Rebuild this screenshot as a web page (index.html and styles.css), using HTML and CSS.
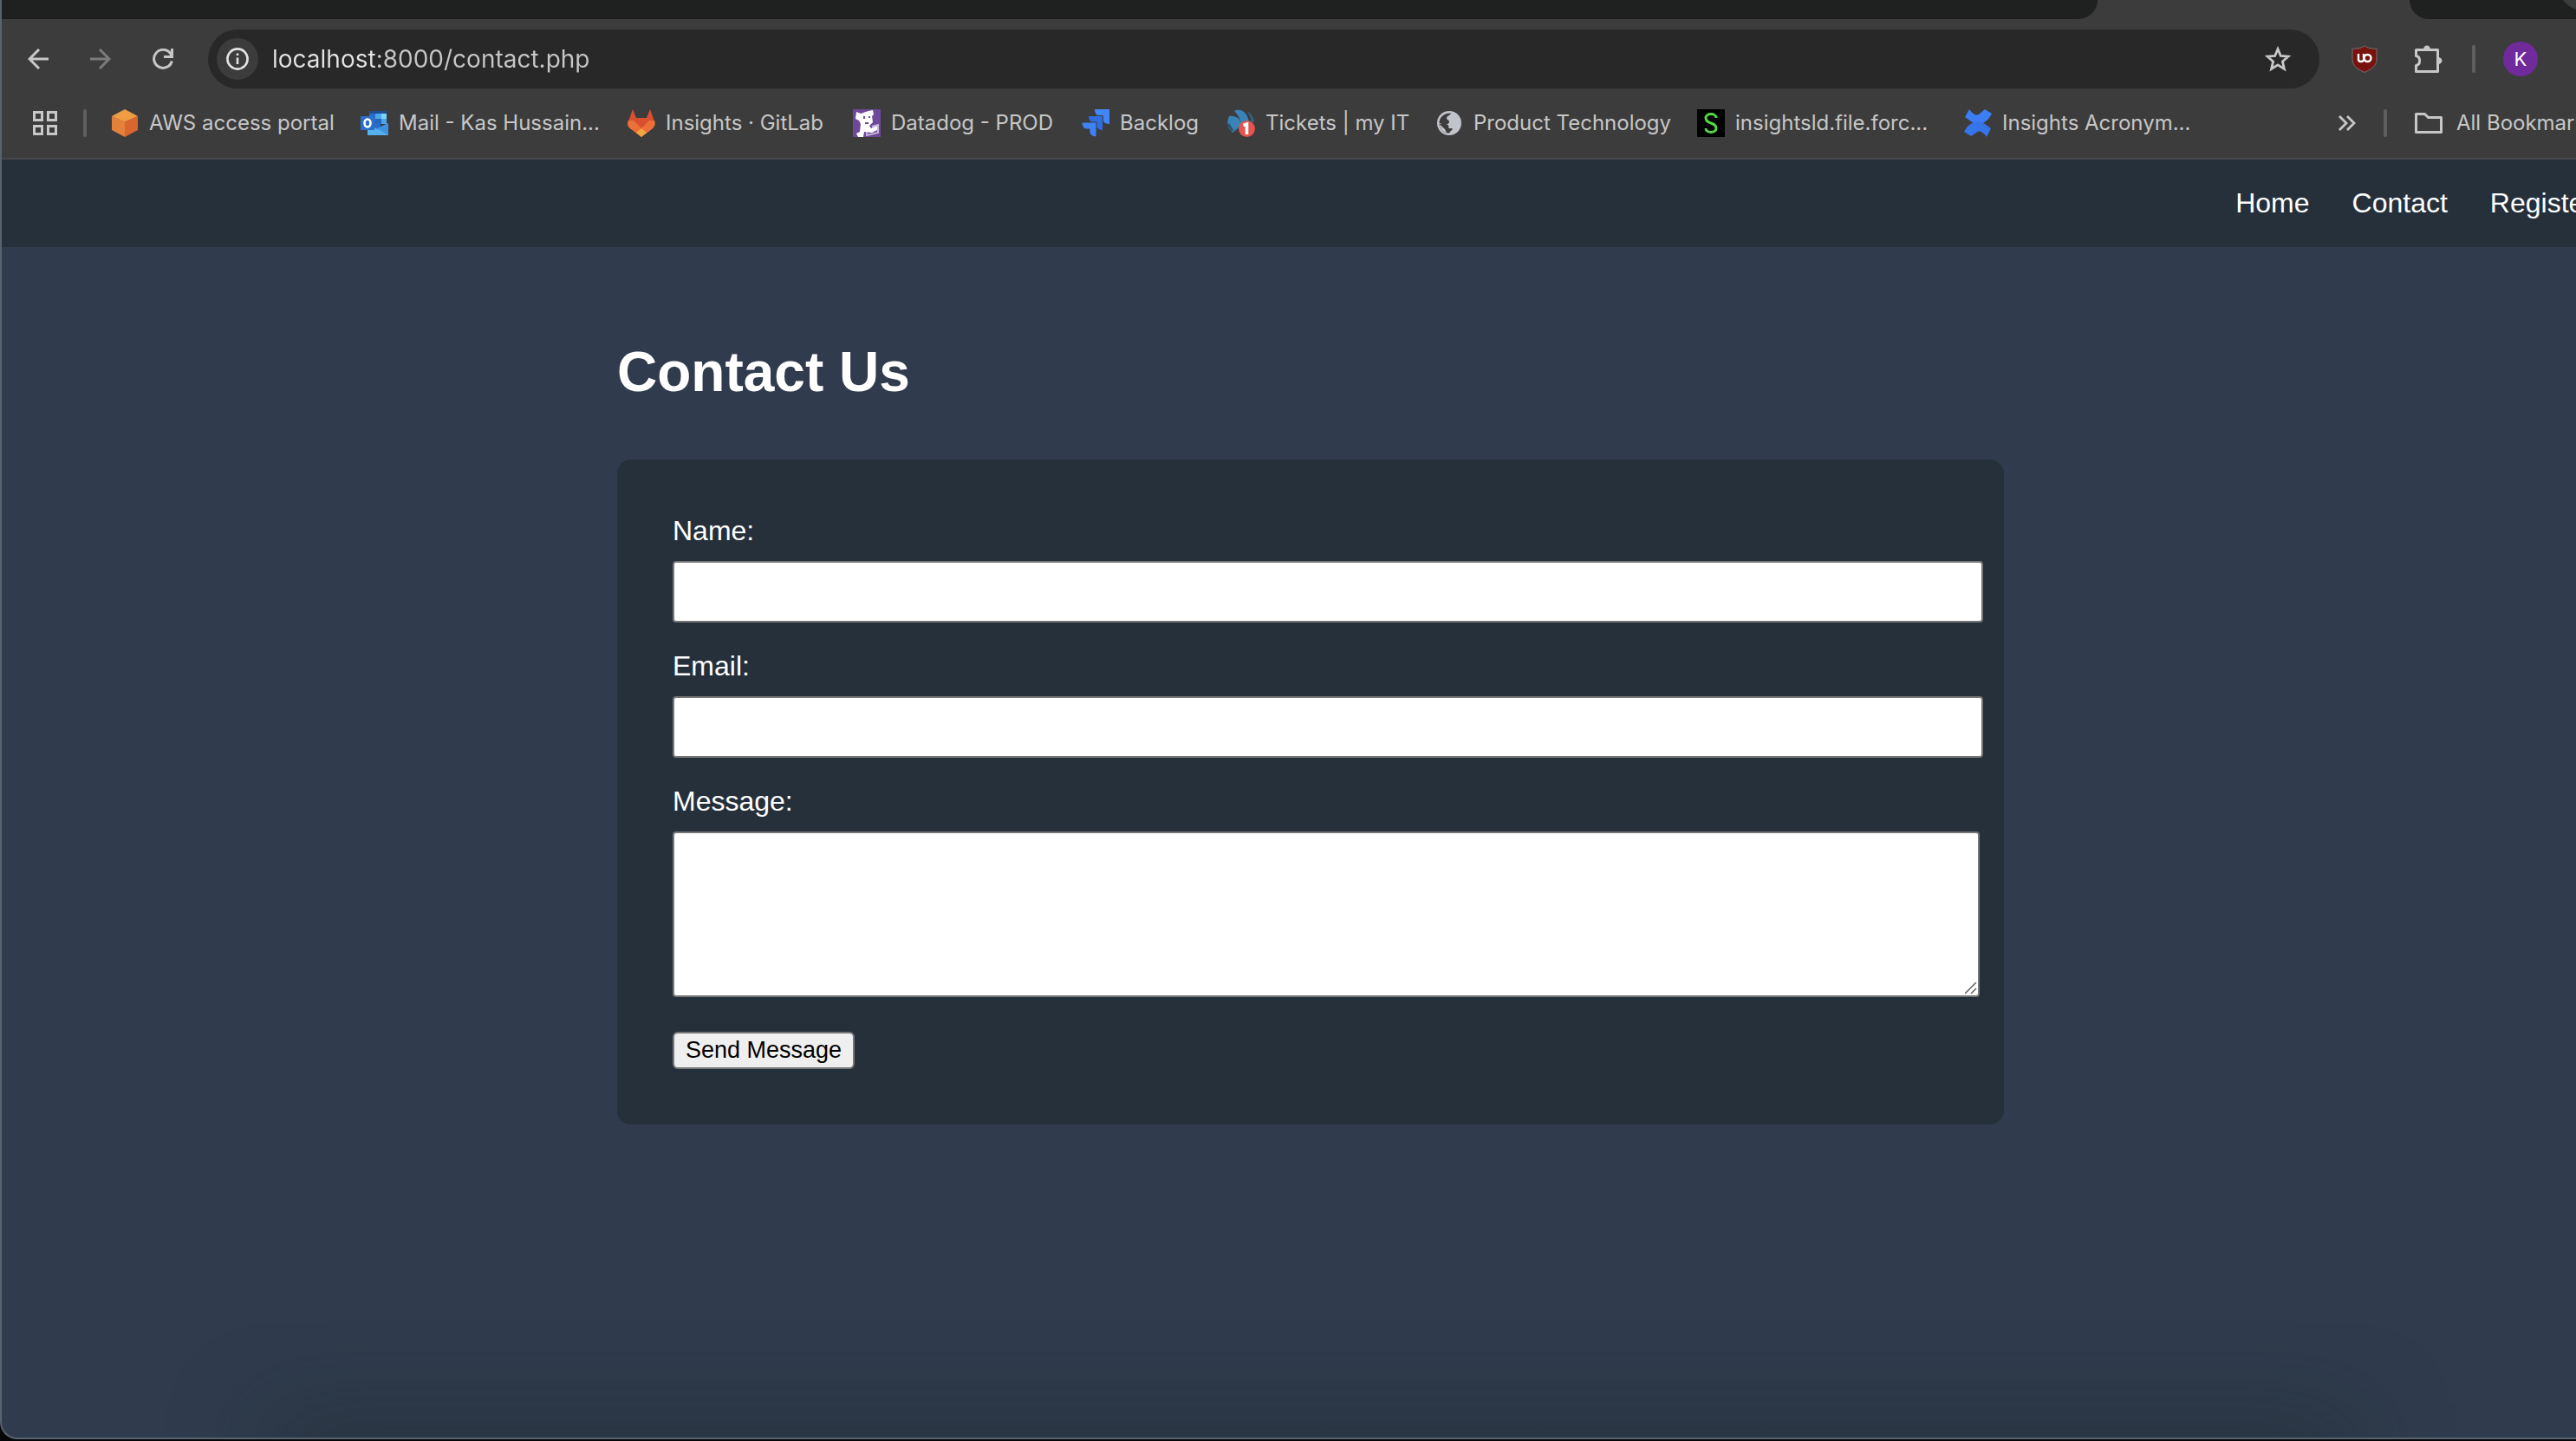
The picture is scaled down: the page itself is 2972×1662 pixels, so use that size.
FILE: index.html
```html
<!DOCTYPE html>
<html lang="en">
<head>
<meta charset="utf-8">
<title>Contact Us</title>
<link rel="stylesheet" href="styles.css">
</head>
<body>
<div class="screen">
<div class="window">
  <div class="chrome">
    <div class="tabstrip">
      <div class="tabs-before"></div>
      <div class="tab-active"></div>
      <div class="tabs-after"><span class="tab-round"></span></div>
    </div>

    <div class="toolbar">
      <div class="nav-buttons">
        <button class="icon-button" aria-label="Back"><svg width="24" height="24" viewBox="0 0 24 24" fill="none" stroke="#c7c7c7" stroke-width="3"><path d="M24 12H2M13 1 2 12l11 11"/></svg></button>
        <button class="icon-button" aria-label="Forward"><svg width="24" height="24" viewBox="0 0 24 24" fill="none" stroke="#7c7c7c" stroke-width="3"><path d="M0 12h22M11 1l11 11-11 11"/></svg></button>
        <button class="icon-button" aria-label="Reload"><svg width="24" height="24" viewBox="0 0 24 24" fill="none" stroke="#c7c7c7" stroke-width="3"><path d="M22.300 14.500A10.500 10.500 0 1 1 20.500 5.500L22 8"/><path d="M22.500 0v9.500H13"/></svg></button>
      </div>
      <div class="address">
        <button class="site-info" aria-label="Site information"><svg width="26" height="26" viewBox="0 0 26 26" fill="none" stroke="#e3e3e3" stroke-width="2.600"><circle cx="13" cy="13" r="11.600"/><path d="M13 11.500v7.500M13 6.500v2.500"/></svg></button>
        <input class="url" type="text" aria-label="Address" value="localhost:8000/contact.php">
        <button class="icon-button" aria-label="Bookmark this page"><svg width="30" height="30" viewBox="0 0 30 30" fill="none" stroke="#c7c7c7" stroke-width="2.800"><path d="M15 3.500l3.300 8 8.600.700-6.500 5.700 2 8.500-7.400-4.600-7.400 4.600 2-8.500-6.500-5.700 8.600-.700z"/></svg></button>
      </div>
      <div class="extensions">
        <button class="icon-button" aria-label="uBlock Origin"><svg width="30" height="32" viewBox="0 0 30 32"><path d="M15 .800C18 3.500 23 4.300 29 4.300V16c0 8-6 12-14 15.400C7 28 1 24 1 16V4.300C7 4.300 12 3.500 15 .800z" fill="#78120c" stroke="#757070"/><g fill="none" stroke="#fff" stroke-width="2.400"><path d="M8 10v6.500q0 2.500 3 2.500 3.500 0 3.500-4"/><path d="M14 10v5"/><circle cx="18.500" cy="15" r="4"/></g></svg></button>
        <button class="icon-button" aria-label="Extensions"><svg width="32" height="32" viewBox="0 0 32 32"><path d="M3 5.500H26.500V30.500H1.500V23.500C7 22.500 7 13.500 1.500 12.500V5.500z" fill="none" stroke="#c7c7c7" stroke-width="3" stroke-linejoin="round"/><path d="M10 5a4 4.500 0 0 1 8 0zM27 14a4.500 4 0 0 1 0 8z" fill="#c7c7c7"/></svg></button>
        <span class="divider"></span>
        <button class="avatar" aria-label="Profile">K</button>
      </div>
    </div>

    <nav class="bookmarks" aria-label="Bookmarks">
      <button class="icon-button" aria-label="Apps"><svg width="28" height="28" viewBox="0 0 28 28" fill="none" stroke="#c7c7c7" stroke-width="3"><path d="M1.500 1.500h9v9h-9zM17.500 1.500h9v9h-9zM1.500 17.500h9v9h-9zM17.500 17.500h9v9h-9z"/></svg></button>
      <span class="divider"></span>
      <div class="bookmark-list">
        <a href="#aws"><svg width="32" height="32" viewBox="0 0 32 32"><path d="M16 0l15 8-15 7L1 8z" fill="#ee9d43"/><path d="M1 8l15 6v18L1 24z" fill="#e3803a"/><path d="M31 8l-15 6v18l15-8z" fill="#d9652f"/></svg>AWS access portal</a>
        <a href="#mail"><svg width="32" height="32" viewBox="0 0 32 32"><path d="M10 2h20v7H10z" fill="#1f4a94"/><path d="M10 5h13v18H10z" fill="#2b6cc9"/><path d="M17 5h7v6h-7z" fill="#4ba7ec"/><path d="M24 5h6v6h-6z" fill="#7bd4f7"/><path d="M17 11h7v6h-7z" fill="#2668c0"/><path d="M24 11h6v6h-6z" fill="#4ba7ec"/><path d="M8 18l12 5 12-7v14H8z" fill="#55b0ee"/><path d="M32 16v14L19 22z" fill="#3f92e0"/><path d="M0 8h16v16H0z" fill="#2a6fc9"/><ellipse cx="8" cy="16" rx="3.500" ry="4.500" fill="none" stroke="#fff" stroke-width="2.600"/></svg>Mail - Kas Hussain...</a>
        <a href="#gitlab"><svg width="32" height="32" viewBox="0 0 32 32"><path d="M6 0l4 10h12l4-10 5 14-15 18L1 14z" fill="#d9502f"/><path d="M1 13l6 0 9 9 9-9h6c2 4 0 8-3 10L16 32 4 23C0 20-1 17 1 13z" fill="#ec7038"/><path d="M16 22l6 5-6 5-6-5z" fill="#f0a640"/></svg>Insights · GitLab</a>
        <a href="#datadog"><svg width="32" height="32" viewBox="0 0 32 32"><path d="M0 0h32v32H0z" fill="#6f489b"/><path d="M4 3l5 2 9-3 5-1 1 5-2 2 1 7-4 4 2 3 8-4 1 5-8 4-9-1-1 6H6l-2-4 4-2 1-9-2-4-4-2z" fill="#fff"/><path d="M12 8h2v3h-2zM18 8h2v2h-2zM14 15h4v2h-4z" fill="#6f489b"/><path d="M22 20l7-2v9l-13 3v-4" fill="none" stroke="#c8b4dc" stroke-width="2"/></svg>Datadog - PROD</a>
        <a href="#backlog"><svg width="32" height="32" viewBox="0 0 32 32"><path d="M15 0h17v17c-5 0-8-3-8-6V8h-3c-4 0-6-4-6-8z" fill="#4287f8"/><path d="M7.500 7.500h17v17c-5 0-8-3-8-6v-3h-3c-4 0-6-4-6-8z" fill="#2f6ce0" stroke="#3c3c3c"/><path d="M0 15h17v17c-5 0-8-3-8-6v-3H6c-4 0-6-4-6-8z" fill="#3f82f7" stroke="#3c3c3c"/></svg>Backlog</a>
        <a href="#tickets"><svg width="32" height="32" viewBox="0 0 32 32"><path d="M8 2c8-4 16 2 17 14l-9 1C15 11 12 6 8 2z" fill="#3a83b8"/><path d="M22 2c6 3 9 8 9 13l-4-1c0-5-2-9-5-12z" fill="#35617f"/><path d="M2 8c8-1 13 3 14 9l-5 6-5 4C0 22-1 15 2 8z" fill="#3a83b8"/><path d="M1 17l5 8" stroke="#2b536e" stroke-width="3"/><circle cx="22.500" cy="22.500" r="9.500" fill="#e25550"/><path d="M18.500 18.500l4-1.500v12" fill="none" stroke="#fff" stroke-width="3.600"/></svg>Tickets | my IT</a>
        <a href="#product"><svg width="32" height="32" viewBox="0 0 32 32"><circle cx="16" cy="16" r="14" fill="#c1c4ca"/><path d="M18 4.500c-1 3-5 3-5 6 0 2 3 1 3 4s-4 3-8 2.500l-3.500-1C4.500 9 10 4.500 18 4.500z" fill="#3c3c3c"/><path d="M19 4.500v4c-3 0-5 2-4 4 1 1 4 0 5 3s4 2 7.500 1C27 9 23 5.500 19 4.500z" fill="#c1c4ca"/><path d="M4.500 17h7c4 0 4 3 4 5h4v2c-2 0-2 3-4 3.500C9 27.500 5 23 4.500 17z" fill="#3c3c3c"/><path d="M5 17.500l6 5.500c1 1 1 3 2 4C8 26 5 22 5 17.500z" fill="#c1c4ca"/><path d="M21 5.500c4 2 6 6 6.500 10h-5c-2 0-2-3-4-3.500h-3c-1-2 1-3 3-3 2-.500 2.500-1.500 2.500-3.500z" fill="#c1c4ca"/></svg>Product Technology</a>
        <a href="#insightsld"><svg width="32" height="32" viewBox="0 0 32 32"><path d="M0 0h32v32H0z"/><path d="M22 10c0-6-12-6-12 0 0 4 3 5 6 6s6 2 6 6c0 6-12 6-12 0" fill="none" stroke="#55d648" stroke-width="3"/></svg>insightsld.file.forc...</a>
        <a href="#acronyms"><svg width="32" height="32" viewBox="0 0 32 32"><path d="M6 0c5 7 9 8 12 5l6-5 8 5c-5 10-14 16-24 9L1 9z" fill="#3b7df5"/><path d="M26 32c-5-7-9-8-12-5l-6 4-8-5c5-10 14-15 24-9l7 5z" fill="#3674ea"/></svg>Insights Acronym...</a>
      </div>
      <div class="bookmark-end">
        <button class="icon-button" aria-label="More bookmarks"><svg width="20" height="18" viewBox="0 0 20 18" fill="none" stroke="#c7c7c7" stroke-width="2.800"><path d="M1 1l8 8-8 8M10 1l8 8-8 8"/></svg></button>
        <span class="divider"></span>
        <button class="all-bookmarks"><svg width="32" height="24" viewBox="0 0 32 24" fill="none" stroke="#c7c7c7" stroke-width="3" stroke-linejoin="round"><path d="M1.500 1.500h10l4 4h15v17h-29z"/></svg>All Bookmarks</button>
      </div>
    </nav>
  </div>

  <div class="page">
    <header class="site-header">
      <nav class="site-nav" aria-label="Site">
        <a href="#home">Home</a>
        <a href="#contact">Contact</a>
        <a href="#register">Register</a>
      </nav>
    </header>
    <main class="container">
      <h1>Contact Us</h1>
      <form class="card">
        <label for="name">Name:</label>
        <input class="field" id="name" type="text">
        <label for="email">Email:</label>
        <input class="field" id="email" type="email">
        <label for="message">Message:</label>
        <textarea class="field message" id="message"></textarea>
        <button class="send" type="submit">Send Message</button>
      </form>
    </main>
  </div>
</div>
</div>
</body>
</html>
```
FILE: styles.css
```css
* { box-sizing: border-box; }

body {
  margin: 0;
  background: #050607;
  font-family: "Liberation Sans", Arial, sans-serif;
}

button {
  font: inherit;
  color: inherit;
  cursor: pointer;
}

svg { display: block; flex: none; }

.screen {
  min-height: 100vh;
  overflow: hidden;
}

/* The window runs on past the right edge of the screen. */
.window {
  position: relative;
  display: flex;
  flex-direction: column;
  width: calc(100% + 50px);
  min-height: calc(100vh - 2px);
  border: solid #56646f;
  border-width: 0 0 2px 2px;
  border-radius: 0 0 0 20px;
  background: #303c4d;
  overflow: hidden;
}

.window::after {
  content: "";
  position: absolute;
  left: 320px;
  right: 320px;
  bottom: -40px;
  height: 40px;
  box-shadow: 0 0 110px 10px rgba(20, 32, 32, 0.5);
  pointer-events: none;
}

/* Browser frame */
.chrome {
  background: #3c3c3c;
  border-bottom: 2px solid #48484a;
  color: #c7c7c7;
  font-family: Inter, "Noto Sans", sans-serif;
}

.tabstrip {
  display: flex;
  height: 22px;
  background: #3c3c3c;
}

.tabs-before {
  flex: 1;
  background: #1f2120;
  border-bottom-right-radius: 22px;
}

.tab-active { width: 360px; }

.tabs-after {
  position: relative;
  width: 242px;
  background: #1f2120;
  border-bottom-left-radius: 22px;
  overflow: hidden;
}

.tab-round {
  position: absolute;
  left: 172px;
  top: -44px;
  width: 56px;
  height: 56px;
  border-radius: 50%;
  background: #3c3c3c;
}

.toolbar {
  display: flex;
  align-items: center;
  height: 92px;
  padding: 0 94px 0 30px;
}

.nav-buttons {
  display: flex;
  gap: 48px;
  margin-right: 40px;
}

.icon-button {
  flex: none;
  padding: 0;
  border: 0;
  background: none;
}

.address {
  flex: 1;
  display: flex;
  align-items: center;
  height: 68px;
  padding: 0 33px 0 10px;
  border-radius: 34px;
  background: #282828;
}

.site-info {
  display: grid;
  place-items: center;
  width: 48px;
  height: 48px;
  padding: 0;
  border: 0;
  border-radius: 50%;
  background: #3c3c3c;
}

.url {
  flex: 1;
  margin: 0 16px;
  padding: 0;
  border: 0;
  outline: 0;
  background: linear-gradient(to right, #e3e3e3 120px, #c7c7c7 120px);
  -webkit-background-clip: text;
  background-clip: text;
  color: transparent;
  font: 28px/40px Inter, "Noto Sans", sans-serif;
}

.extensions {
  display: flex;
  align-items: center;
  margin-left: 37px;
}

.extensions .icon-button + .icon-button { margin-left: 43px; }

.extensions .divider { margin: 0 32px 0 34px; }

.divider {
  flex: none;
  width: 4px;
  height: 32px;
  border-radius: 2px;
  background: #5f5f5f;
}

.avatar {
  width: 40px;
  height: 40px;
  padding: 0;
  border: 0;
  border-radius: 50%;
  background: #6f2a9c;
  color: #fff;
  font-size: 22px;
  line-height: 40px;
}

.bookmarks {
  display: flex;
  align-items: center;
  height: 68px;
  padding: 0 0 12px 36px;
  font-size: 24px;
  line-height: 32px;
}

.bookmarks > .divider { margin: 0 28px 0 30px; }

.bookmark-list {
  display: grid;
  grid-template-columns: 288px 308px 260px 264px 168px 240px 302px 308px auto;
}

.bookmark-list a,
.all-bookmarks {
  display: flex;
  align-items: center;
  gap: 12px;
  color: inherit;
  text-decoration: none;
  white-space: nowrap;
}

.bookmark-end {
  display: flex;
  align-items: center;
  gap: 32px;
  margin-left: auto;
}

.all-bookmarks {
  width: 236px;
  gap: 16px;
  padding: 0;
  border: 0;
  background: none;
}

/* Contact page */
.page { color: #fff; }

.site-header {
  padding: 32px 30px;
  background: #25303b;
}

.site-nav {
  display: flex;
  justify-content: flex-end;
  gap: 49px;
  font-size: 32px;
  line-height: 37px;
}

.site-nav a {
  color: #fff;
  text-decoration: none;
}

.container {
  max-width: 1600px;
  margin: 0 auto;
  padding: 108px 0 64px;
}

h1 {
  margin: 0 0 64px;
  font-size: 64px;
  line-height: 73px;
}

.card {
  padding: 64px 24px 64px 64px;
  border-radius: 16px;
  background: #25303b;
  font-size: 32px;
  line-height: 37px;
}

.card label { display: block; }

.field {
  display: block;
  width: 100%;
  height: 71px;
  margin: 16px 0 32px;
  padding: 16px;
  border: 2px solid #767676;
  border-radius: 4px;
  background: #fff;
  font: 27px/32px "Liberation Sans", Arial, sans-serif;
}

.message {
  width: calc(100% - 4px);
  height: 191px;
  margin-bottom: 40px;
}

.message::-webkit-resizer {
  background: url("data:image/svg+xml,%3Csvg xmlns='http://www.w3.org/2000/svg' width='15' height='15' fill='none' stroke='%23606060' stroke-width='1.500'%3E%3Cpath d='M0 13 13 0M7 13l6-6'/%3E%3C/svg%3E") no-repeat;
}

.send {
  display: block;
  padding: 4px 13px;
  border: 2px solid #767676;
  border-radius: 6px;
  background: #efefef;
  color: #000;
  font-size: 27px;
  line-height: 31px;
}
```
